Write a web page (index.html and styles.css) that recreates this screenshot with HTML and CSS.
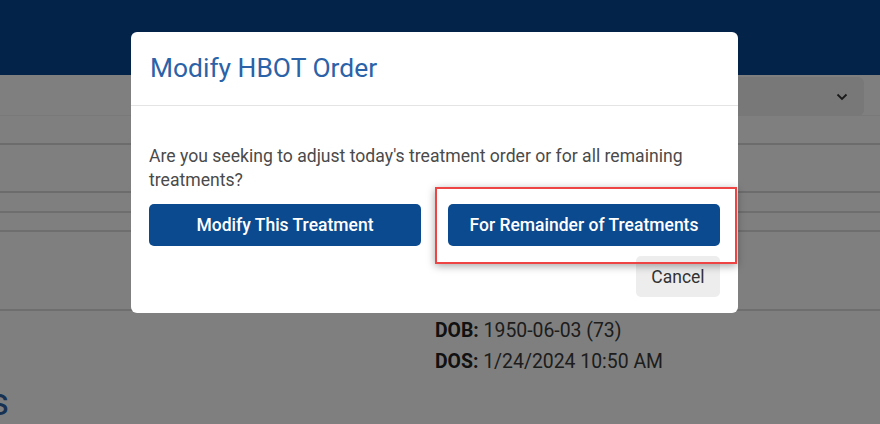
FILE: index.html
```html
<!DOCTYPE html>
<html>
<head>
    <title>Modify HBOT Order</title>
    <link rel="stylesheet" href="styles.css">
</head>
<body>
    <div class="top-bar"></div>

    <div class="page">
        <div class="row row-select">
            <div class="select-box">
                <svg class="chevron" width="12" height="8" viewBox="0 0 12 8"><path d="M1.5 1.5 L6 6 L10.5 1.5" fill="none" stroke="#333" stroke-width="1.8"/></svg>
            </div>
        </div>
        <div class="row row-a"></div>
        <div class="row row-b"></div>
        <div class="row row-c"></div>
        <div class="row row-d"></div>
        <div class="row row-e"></div>
        <div class="patient-info">
            <p><b>DOB:</b> 1950-06-03 (73)</p>
            <p><b>DOS:</b> 1/24/2024 10:50 AM</p>
        </div>
        <div class="section-title"><span>Treatments</span></div>
    </div>

    <div class="backdrop"></div>

    <div class="modal">
        <div class="modal-header">
            <h1>Modify HBOT Order</h1>
        </div>
        <div class="modal-body">
            <p>Are you seeking to adjust today's treatment order or for all remaining treatments?</p>
            <div class="choice-buttons">
                <button class="primary-btn">Modify This Treatment</button>
                <button class="primary-btn">For Remainder of Treatments</button>
            </div>
            <div class="modal-footer">
                <button class="cancel-btn">Cancel</button>
            </div>
        </div>
        <div class="highlight"></div>
    </div>
</body>
</html>
```

FILE: styles.css
```css
body {
    margin: 0;
    font-family: Roboto, "Liberation Sans", sans-serif;
    background-color: #ffffff;
    overflow: hidden;
    height: 424px;
}
.top-bar {
    height: 75px;
    background-color: #064693;
}
.page {
    position: relative;
}
.row {
    border-bottom: 1px solid #e6e6e6;
}
.row-select {
    height: 41px;
    display: flex;
    justify-content: flex-end;
    padding: 2px 16px 0 0;
    box-sizing: border-box;
    border-bottom-color: #f2f2f2;
}
.select-box {
    width: 300px;
    height: 39px;
    background-color: #f0f0f0;
    border-radius: 6px;
    display: flex;
    align-items: center;
    justify-content: flex-end;
    padding-right: 16px;
    box-sizing: border-box;
}
.row-a { height: 27px; border-bottom: 2px solid #d8d8d8; }
.row-b { height: 46px; border-bottom: 2px solid #d8d8d8; }
.row-c { height: 18px; border-bottom: 2px solid #dcdcdc; }
.row-d { height: 17px; border-bottom: 2px solid #dcdcdc; }
.row-e { height: 77px; border-bottom: 2px solid #dcdcdc; }
.patient-info {
    margin-left: 435px;
    padding-top: 4px;
    font-size: 19.4px;
    color: #3a3a3a;
}
.patient-info b {
    color: #222;
}
.patient-info p {
    margin: 0;
    line-height: 31px;
}
.section-title {
    width: 9px;
    overflow: hidden;
    display: flex;
    justify-content: flex-end;
    font-size: 38px;
    line-height: 44px;
    color: #2f62a6;
    margin-top: 3px;
    white-space: nowrap;
}
.backdrop {
    position: fixed;
    inset: 0;
    background-color: rgba(0, 0, 0, 0.5);
}
.modal {
    position: absolute;
    left: 131px;
    top: 32px;
    width: 607px;
    background-color: #fff;
    border-radius: 6px;
}
.modal-header {
    height: 74px;
    border-bottom: 1px solid #e4e4e4;
    padding: 0 19px;
    display: flex;
    align-items: center;
    box-sizing: border-box;
}
.modal-header h1 {
    margin: 0 0 2px;
    font-size: 26.4px;
    font-weight: 400;
    color: #2b62a8;
}
.modal-body {
    padding: 38px 18px 16px;
}
.modal-body p {
    margin: 0 0 12px;
    font-size: 17.6px;
    line-height: 24px;
    color: #4a4a4a;
}
.choice-buttons {
    display: grid;
    grid-template-columns: 1fr 1fr;
    gap: 27px;
}
.primary-btn {
    height: 42px;
    border: none;
    border-radius: 5px;
    background-color: #0b4a8e;
    color: #fff;
    font-family: inherit;
    font-size: 17.5px;
    font-weight: 500;
}
.modal-footer {
    display: flex;
    justify-content: flex-end;
    margin-top: 10px;
}
.cancel-btn {
    width: 84px;
    height: 41px;
    border: none;
    border-radius: 5px;
    background-color: #ededed;
    color: #333;
    font-family: inherit;
    font-size: 17.5px;
    padding-top: 2px;
}
.highlight {
    position: absolute;
    left: 304px;
    top: 155px;
    width: 298px;
    height: 73px;
    border: 2px solid #ef4444;
    box-shadow: 0 2px 8px rgba(0, 0, 0, 0.35);
}
```
